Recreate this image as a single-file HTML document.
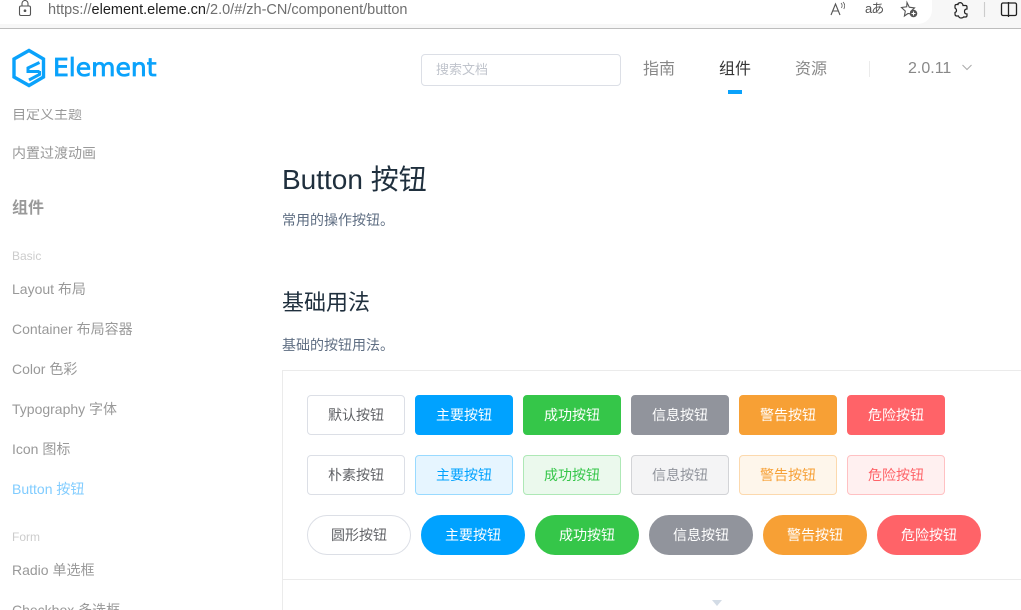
<!DOCTYPE html>
<html lang="zh-CN"><head><meta charset="utf-8">
<style>
html,body{margin:0;padding:0;background:#fff;width:1021px;height:610px;overflow:hidden;}
#p{position:relative;width:1021px;height:610px;overflow:hidden;font-family:"Liberation Sans","Noto Sans CJK SC",sans-serif;}
.a{position:absolute;white-space:nowrap;}
.s{position:absolute;left:12px;font-size:14px;color:#999;line-height:20px;white-space:nowrap;}
.b{position:absolute;box-sizing:border-box;height:40px;text-align:center;line-height:39px;font-size:14px;border:1px solid;border-radius:4px;white-space:nowrap;}
.w{width:98px}.r{width:104px;border-radius:20px}
</style></head><body><div id="p">
<div class="a" style="left:0;top:0;width:1021px;height:29px;box-sizing:border-box;background:#f7f7f7;border-bottom:1px solid #bdbdbd;"></div>
<div class="a" style="left:-20px;top:-10px;width:952px;height:34px;background:#fff;border-radius:0 0 14px 14px;"></div>
<svg class="a" style="left:0;top:0" width="1021" height="28" fill="none" stroke="#555" stroke-width="1.1">
<rect x="19.500" y="6" width="11" height="9.500" rx="1.500"/><path d="M22 6V3.500a3 3 0 0 1 6 0V6"/><circle cx="25" cy="10.700" r=".8" fill="#555"/>
<path d="M831 15l4.500-11 4.500 11M832.800 11h5.400"/><path d="M841 3q2 2 .5 5M843 2q3 3 .8 7" stroke-width=".8"/>
<path d="M907 2.500l2.300 4.700 5.200.7-3.800 3.600.5 2.500-3.200-.5-3.600 2.500.9-4.900-3.800-3.600 5.200-.7z"/><circle cx="913.500" cy="13.500" r="3.800" fill="#555" stroke="none"/><path d="M911.500 13.500h4M913.500 11.500v4" stroke="#fff"/>
<path d="M958 3.500q2-1.500 3.500-.5t1.500 2.500h2.500q1.500 0 1.500 1.500v2q-2.500 0-2.500 2.500t2.500 2.500v1.500q0 1.500-1.500 1.500h-2q-.5 1-2.500 1t-2.500-2h-2q-1.500 0-1.500-2v-1.500q1.500-.5 1.500-2t-1.500-2.500v-2q0-1.500 1.500-1.500h1.500q-.5-1 1-1.500z" stroke="#222" stroke-width="1.200"/>
<path d="M984.500 2v15" stroke="#ccc"/>
<rect x="1001.500" y="3" width="15" height="12.500" rx="1.500" stroke="#222" stroke-width="1.300"/><path d="M1008.500 2v15" stroke="#222" stroke-width="1.300"/>
</svg>
<div class="a" style="left:865px;top:0;font-size:13px;line-height:18px;color:#555;letter-spacing:-1px;">aあ</div>
<div class="a" style="left:48px;top:1px;font-size:14.500px;line-height:19px;color:#6f6f6f;">https://<span style="color:#1f1f1f">element.eleme.cn</span>/2.0/#/zh-CN/component/button</div>
<svg class="a" style="left:0;top:40px" width="50" height="55" fill="none" stroke="#0aa2fb" stroke-width="3.400">
<path d="M29 10.500L43.500 19v18L29 45.500 14 37V19z"/><path d="M39.500 22.500L28 28v3.500h11.500" stroke-width="3"/><path d="M39.500 31v3.500L29 40" stroke-width="3"/></svg>
<div class="a" style="left:53px;top:50px;font-size:25px;line-height:36px;color:#0aa2fb;font-family:'DejaVu Sans',sans-serif;-webkit-text-stroke:.8px #0aa2fb;">Element</div>
<div class="a" style="left:421px;top:54px;width:200px;height:32px;box-sizing:border-box;border:1px solid #dcdfe6;border-radius:4px;padding-left:14px;font-size:13px;line-height:30px;color:#c0c4cc;">搜索文档</div>
<div class="a" style="left:643px;top:59px;font-size:16px;line-height:22px;color:#888;">指南</div>
<div class="a" style="left:719px;top:59px;font-size:16px;line-height:22px;color:#333;">组件</div>
<div class="a" style="left:728px;top:90px;width:14px;height:4px;background:#0aa2fb;"></div>
<div class="a" style="left:795px;top:59px;font-size:16px;line-height:22px;color:#888;">资源</div>
<div class="a" style="left:869px;top:61px;width:1px;height:16px;background:#ebebeb;"></div>
<div class="a" style="left:908px;top:58px;font-size:16px;line-height:22px;color:#888;">2.0.11</div>
<svg class="a" style="left:961px;top:63px" width="12" height="9" fill="none" stroke="#aaa"><path d="M1.500 2l4.500 4.500L10.500 2"/></svg>
<div class="a" style="left:0;top:109px;width:240px;height:12px;overflow:hidden;"><div class="s" style="top:-5px;">自定义主题</div></div>
<div class="s" style="top:143px;">内置过渡动画</div>
<div class="s" style="top:199px;font-size:16px;font-weight:700;color:#999;">组件</div>
<div class="s" style="top:246px;font-size:12px;color:#ccc;">Basic</div>
<div class="s" style="top:279px;">Layout 布局</div>
<div class="s" style="top:319px;">Container 布局容器</div>
<div class="s" style="top:359px;">Color 色彩</div>
<div class="s" style="top:399px;">Typography 字体</div>
<div class="s" style="top:439px;">Icon 图标</div>
<div class="s" style="top:479px;color:#80ccff;">Button 按钮</div>
<div class="s" style="top:527px;font-size:12px;color:#ccc;">Form</div>
<div class="s" style="top:560px;">Radio 单选框</div>
<div class="s" style="top:600px;">Checkbox 多选框</div>
<div class="a" style="left:282px;top:161px;font-size:28px;line-height:38px;color:#1f2f3d;">Button 按钮</div>
<div class="a" style="left:282px;top:210px;font-size:14px;line-height:20px;color:#5e6d82;">常用的操作按钮。</div>
<div class="a" style="left:282px;top:287px;font-size:22px;line-height:32px;color:#1f2f3d;">基础用法</div>
<div class="a" style="left:282px;top:335px;font-size:14px;line-height:20px;color:#5e6d82;">基础的按钮用法。</div>
<div class="a" style="left:282px;top:370px;width:760px;height:260px;box-sizing:border-box;border:1px solid #ebebeb;"></div>
<div class="a" style="left:283px;top:579px;width:738px;height:1px;background:#ebebeb;"></div>
<div class="a" style="left:712px;top:600px;width:0;height:0;border:5px solid transparent;border-top:6px solid #d3dce6;border-bottom:0;"></div>

<div class="b w" style="left:307px;top:395px;background:#fff;border-color:#dcdfe6;color:#606266;">默认按钮</div>
<div class="b w" style="left:415px;top:395px;background:#00a2ff;border-color:#00a2ff;color:#fff;">主要按钮</div>
<div class="b w" style="left:523px;top:395px;background:#35c649;border-color:#35c649;color:#fff;">成功按钮</div>
<div class="b w" style="left:631px;top:395px;background:#91949c;border-color:#91949c;color:#fff;">信息按钮</div>
<div class="b w" style="left:739px;top:395px;background:#f7a035;border-color:#f7a035;color:#fff;">警告按钮</div>
<div class="b w" style="left:847px;top:395px;background:#ff6368;border-color:#ff6368;color:#fff;">危险按钮</div>

<div class="b w" style="left:307px;top:455px;background:#fff;border-color:#dcdfe6;color:#606266;">朴素按钮</div>
<div class="b w" style="left:415px;top:455px;background:#e6f5ff;border-color:#99daff;color:#00a2ff;">主要按钮</div>
<div class="b w" style="left:523px;top:455px;background:#ebf9ed;border-color:#aee8b6;color:#35c649;">成功按钮</div>
<div class="b w" style="left:631px;top:455px;background:#f4f4f5;border-color:#d3d4d7;color:#91949c;">信息按钮</div>
<div class="b w" style="left:739px;top:455px;background:#fef6eb;border-color:#fcd9ae;color:#f7a035;">警告按钮</div>
<div class="b w" style="left:847px;top:455px;background:#fff0f0;border-color:#ffc1c3;color:#ff6368;">危险按钮</div>

<div class="b r" style="left:307px;top:515px;background:#fff;border-color:#dcdfe6;color:#606266;">圆形按钮</div>
<div class="b r" style="left:421px;top:515px;background:#00a2ff;border-color:#00a2ff;color:#fff;">主要按钮</div>
<div class="b r" style="left:535px;top:515px;background:#35c649;border-color:#35c649;color:#fff;">成功按钮</div>
<div class="b r" style="left:649px;top:515px;background:#91949c;border-color:#91949c;color:#fff;">信息按钮</div>
<div class="b r" style="left:763px;top:515px;background:#f7a035;border-color:#f7a035;color:#fff;">警告按钮</div>
<div class="b r" style="left:877px;top:515px;background:#ff6368;border-color:#ff6368;color:#fff;">危险按钮</div>
</div></body></html>
